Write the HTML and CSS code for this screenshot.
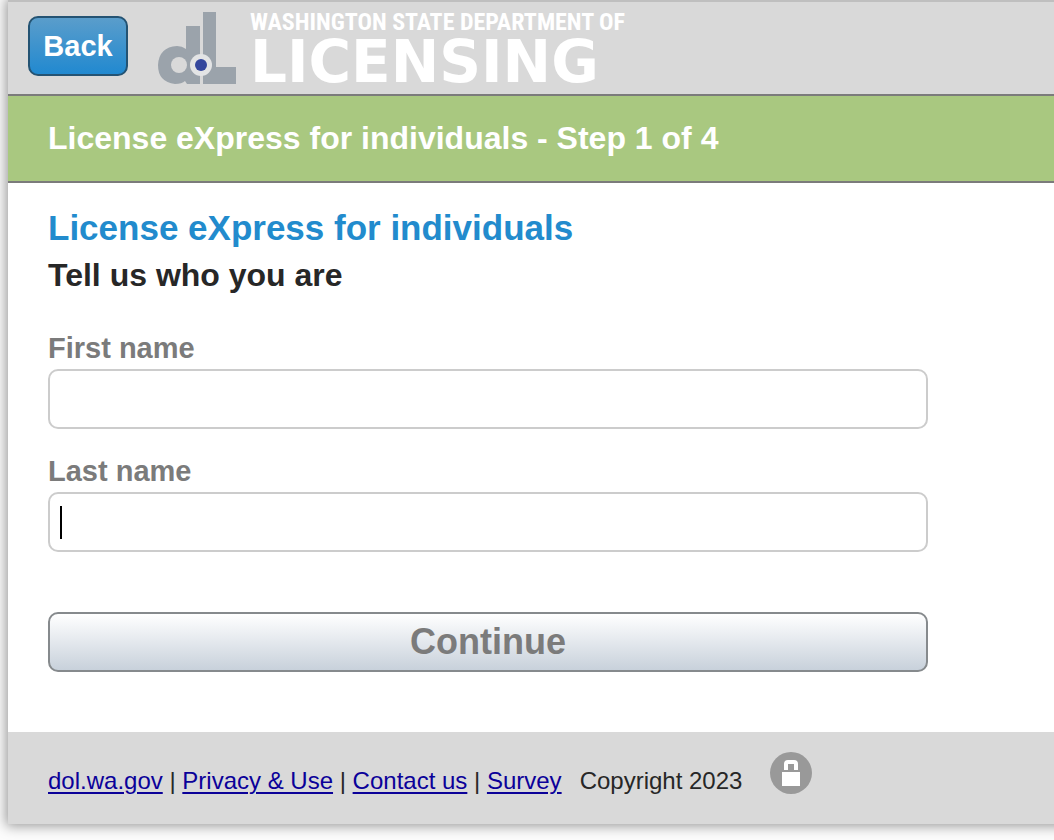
FILE: index.html
```html
<!DOCTYPE html>
<html lang="en">
<head>
<meta charset="UTF-8">
<meta name="viewport" content="width=device-width, initial-scale=1.0">
<title>License eXpress for individuals</title>
<link rel="stylesheet" href="styles.css">
</head>
<body>
<div class="page">
    <header class="header">
        <button type="button" class="back">Back</button>
        <div class="logo">
            <svg class="logo-mark" width="78" height="72" viewBox="0 0 78 72" aria-hidden="true">
                <path fill="#9ba3ab" d="M44 0H58V55H78V72H45V0Z"/>
                <path fill="#9ba3ab" d="M28 14H42V72H29L27 69Q24 72 17 72Q0 70 0 53Q1 35 19 34Q24 34 28 37Z"/>
                <circle cx="21" cy="53" r="8" fill="#d9d9d9"/>
                <circle cx="43" cy="53" r="11" fill="#e3e4e5"/>
                <circle cx="43" cy="53" r="6" fill="#34479d"/>
            </svg>
            <div class="logo-text">
                <span class="logo-top">WASHINGTON STATE DEPARTMENT OF</span>
                <span class="logo-bottom">LICENSING</span>
            </div>
        </div>
    </header>
    <div class="step">License eXpress for individuals - Step 1 of 4</div>
    <main class="content">
        <h1>License eXpress for individuals</h1>
        <h2>Tell us who you are</h2>
        <form class="form">
            <label for="firstName">First name</label>
            <input type="text" id="firstName" name="firstName">
            <label for="lastName">Last name</label>
            <input type="text" id="lastName" name="lastName" class="active">
            <button type="button" class="continue">Continue</button>
        </form>
    </main>
    <footer class="footer">
        <div class="links">
            <a href="#">dol.wa.gov</a> | <a href="#">Privacy &amp; Use</a> | <a href="#">Contact us</a> | <a href="#">Survey</a>
        </div>
        <span class="copyright">Copyright 2023</span>
        <svg class="lock" width="42" height="42" viewBox="0 0 42 42" aria-hidden="true">
            <circle cx="21" cy="21" r="21" fill="#999999"/>
            <path d="M16 18V12Q16 10 18 10H24Q26 10 26 12V18" fill="none" stroke="#ffffff" stroke-width="4"/>
            <rect x="12" y="20" width="18" height="14" fill="#ffffff"/>
        </svg>
    </footer>
</div>
</body>
</html>
```
FILE: styles.css
```css
body {
    margin: 0;
    padding: 0 0 16px 8px;
    background-color: #fcfcfc;
    font-family: "Helvetica Neue", "Liberation Sans", Arial, sans-serif;
    color: #272727;
    overflow-x: hidden;
}

.page {
    margin-right: -20px;
    background-color: #ffffff;
    box-shadow: 0 0 12px 2px rgba(0, 0, 0, 0.4);
}

.header {
    display: flex;
    align-items: flex-start;
    gap: 30px;
    padding: 10px 20px;
    background-color: #d9d9d9;
    border-top: 2px solid #bfbfbf;
    border-bottom: 2px solid #7b7b7b;
}

.back {
    width: 100px;
    height: 60px;
    margin-top: 4px;
    padding: 0;
    border: 2px solid #245373;
    border-radius: 10px;
    background: linear-gradient(#5a9dcb, #2189d0);
    color: #ffffff;
    font-family: inherit;
    font-size: 29px;
    font-weight: bold;
    cursor: pointer;
}

.logo {
    display: flex;
    gap: 14px;
}

.logo-text {
    display: flex;
    flex-direction: column;
    color: #ffffff;
    font-weight: bold;
    white-space: nowrap;
}

.logo-top {
    font-family: "Liberation Sans Narrow", "Roboto Condensed", "Liberation Sans", sans-serif;
    font-size: 24px;
    line-height: 20px;
}

.logo-bottom {
    height: 52px;
    font-family: "DejaVu Sans", Verdana, sans-serif;
    font-size: 58px;
    line-height: 60px;
}

.step {
    padding: 24px 40px;
    background-color: #a9c880;
    border-bottom: 2px solid #7b7b7b;
    color: #ffffff;
    font-size: 32px;
    font-weight: bold;
    line-height: 37px;
}

.content {
    padding: 24px 40px 60px;
}

h1 {
    margin: 0 0 2px;
    color: #228bcd;
    font-size: 35px;
    line-height: 42px;
}

h2 {
    margin: 0 0 36px;
    font-size: 32px;
    line-height: 48px;
}

.form {
    display: flex;
    flex-direction: column;
    max-width: 880px;
}

label {
    margin-bottom: 8px;
    color: #7b7b7b;
    font-size: 29px;
    font-weight: bold;
    line-height: 26px;
}

input[type="text"] {
    box-sizing: border-box;
    width: 100%;
    height: 60px;
    margin-bottom: 29px;
    padding: 10px;
    border: 2px solid #cccccc;
    border-radius: 10px;
    background-color: #ffffff;
    font-family: inherit;
    font-size: 29px;
}

/* text cursor in the field being filled in */
input.active {
    background-image: linear-gradient(#000000, #000000);
    background-repeat: no-repeat;
    background-size: 2px 33px;
    background-position: 10px center;
}

.continue {
    height: 60px;
    margin-top: 31px;
    border: 2px solid #868a8d;
    border-radius: 10px;
    background: linear-gradient(#ffffff, #c8d1db);
    color: #7b7b7b;
    font-family: inherit;
    font-size: 36px;
    font-weight: bold;
    cursor: pointer;
}

.footer {
    display: flex;
    align-items: flex-start;
    padding: 20px 40px 14px;
    background-color: #d9d9d9;
    font-size: 24px;
    line-height: 58px;
}

.footer a {
    color: #0b0199;
    text-decoration-thickness: 2px;
    text-underline-offset: 3px;
}

.copyright {
    margin-left: 18px;
}

.lock {
    margin-left: 28px;
}
```
